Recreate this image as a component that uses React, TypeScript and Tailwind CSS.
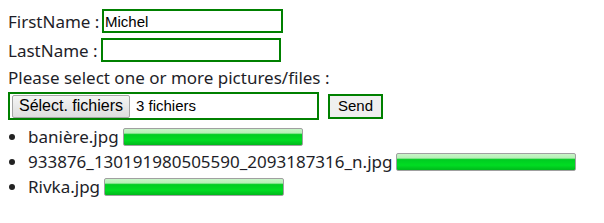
import React from 'react';

const files = [
  { name: 'banière.jpg' },
  { name: '933876_130191980505590_2093187316_n.jpg' },
  { name: 'Rivka.jpg' },
];

const ProgressBar = () => (
  <div className="ml-[4px] h-[18px] w-[180px] rounded-[2px] border border-[#a0a0a0] bg-[linear-gradient(to_bottom,#c8f5c8_0%,#b6efb6_25%,#00cc22_35%,#00dd22_70%,#00b81c_100%)]" />
);

export default function App() {
  return (
    <div className="pl-[8px] pt-[9px] text-[17px] text-[#1e1e28]" style={{ fontFamily: '"Noto Sans", sans-serif' }}>
      {/* Names */}
      <div className="flex h-[24px] items-center">
        <span className="w-[94px] leading-none">FirstName :</span>
        <input
          defaultValue="Michel"
          className="h-[24px] w-[181px] border-2 border-[#008000] px-[1px] text-[15px] text-black outline-none"
          style={{ fontFamily: '"Liberation Sans", Arial, sans-serif' }}
        />
      </div>
      <div className="mt-[5px] flex h-[24px] items-center">
        <span className="w-[93px] leading-none">LastName :</span>
        <input className="h-[24px] w-[180px] border-2 border-[#008000] outline-none" />
      </div>

      {/* Files */}
      <div className="mt-[4px] flex h-[24px] items-center">Please select one or more pictures/files :</div>
      <div className="mt-[2px] flex items-center" style={{ fontFamily: '"Liberation Sans", Arial, sans-serif' }}>
        <div className="flex h-[28px] w-[311px] items-center border-2 border-[#008000] pl-[2px]">
          <div className="flex h-[23px] w-[118px] items-center justify-center rounded-[2px] border border-[#a5a5a5] bg-[linear-gradient(to_bottom,#f4f4f4,#dedede)] text-[16px] text-black">
            Sélect. fichiers
          </div>
          <span className="ml-[6px] text-[15px] text-black">3 fichiers</span>
        </div>
        <div className="ml-[9px] flex h-[25px] w-[55px] items-center justify-center border-2 border-[#008000] bg-[#efefef] text-[15px] text-black">
          Send
        </div>
      </div>

      {/* Upload list */}
      <ul className="mt-[4px] list-disc pl-[20px]">
        {files.map((f) => (
          <li key={f.name} className="h-[25px] marker:text-[#222]">
            <div className="flex h-[25px] items-center">
              <span>{f.name}</span>
              <ProgressBar />
            </div>
          </li>
        ))}
      </ul>
    </div>
  );
}
